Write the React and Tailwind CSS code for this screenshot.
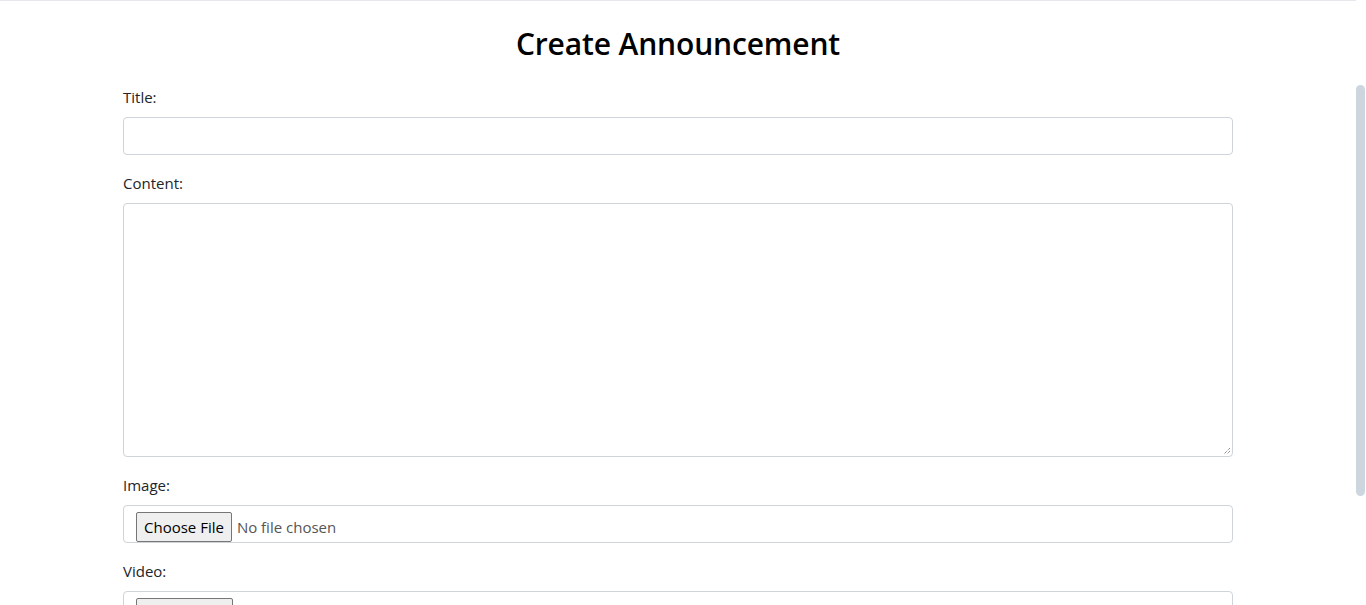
export default function App() {
  const font = { fontFamily: '"Open Sans", "Noto Sans", sans-serif' };
  return (
    <div className="flex h-[605px] overflow-hidden bg-white text-[#212529]" style={font}>
      <div className="flex-1 flex flex-col">
        <div className="h-[2px] border-b border-[#e5e7eb]"></div>
        <div className="w-[1110px] mx-auto">
          <h2 className="text-[30px] leading-[38px] font-semibold text-center text-black pt-[24px] pb-[22px] tracking-[-0.15px]">
            Create Announcement
          </h2>
          <div className="mb-4">
            <label className="block text-[15px] leading-6 mb-2">Title:</label>
            <div className="h-[38px] border border-[#ced4da] rounded"></div>
          </div>
          <div className="mb-4">
            <label className="block text-[15px] leading-6 mb-2">Content:</label>
            <div className="relative h-[254px] border border-[#ced4da] rounded">
              <svg className="absolute right-[1px] bottom-[1px]" width="9" height="9" viewBox="0 0 9 9">
                <path d="M8 2 L2 8 M8 5 L5 8" stroke="#666" strokeWidth="1" strokeDasharray="1 1" />
              </svg>
            </div>
          </div>
          <div className="mb-4">
            <label className="block text-[15px] leading-6 mb-2">Image:</label>
            <div className="h-[38px] border border-[#ced4da] rounded flex items-start pl-3 pt-[6px]">
              <span className="h-[30px] px-[7px] flex items-center border border-[#767676] rounded-[2px] bg-[#efefef] text-[15px] text-black">Choose File</span>
              <span className="ml-[5px] h-[30px] flex items-center text-[15px] text-[#555]">No file chosen</span>
            </div>
          </div>
          <div className="mb-4">
            <label className="block text-[15px] leading-6 mb-2">Video:</label>
            <div className="h-[38px] border border-[#ced4da] rounded flex items-start pl-3 pt-[6px]">
              <span className="h-[30px] w-[97px] border border-[#767676] rounded-[2px] bg-[#efefef]"></span>
            </div>
          </div>
        </div>
      </div>
      <div className="w-[10px] pt-[85px] pr-[1px]">
        <div className="w-[9px] h-[411px] rounded-full bg-[#cdd6df]"></div>
      </div>
    </div>
  );
}
